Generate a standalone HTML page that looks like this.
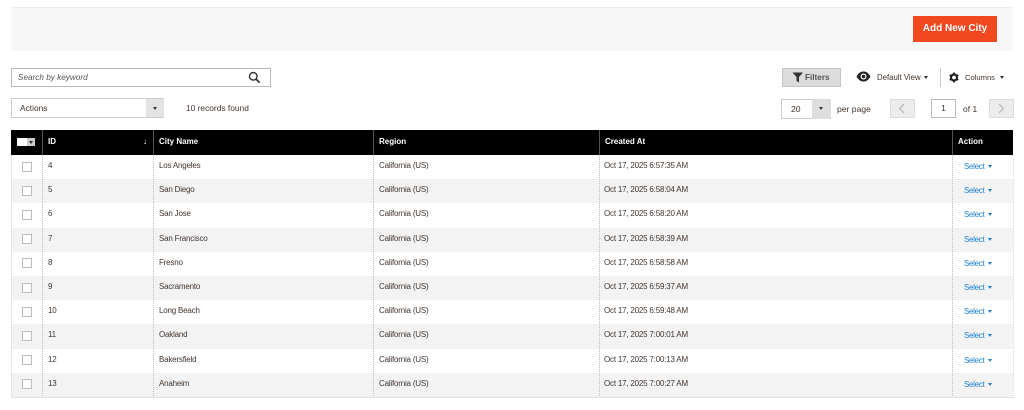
<!DOCTYPE html>
<html>
<head>
<meta charset="utf-8">
<style>
html,body{margin:0;padding:0;background:#fff}
body{width:1024px;height:410px;position:relative;overflow:hidden;font-family:"Liberation Sans",sans-serif;color:#41362f;font-size:8px;filter:blur(.3px)}
.a{position:absolute;white-space:nowrap}
.bar{left:11px;top:7px;width:1002px;height:44px;background:#f7f7f7;border-top:1px solid #eee;box-sizing:border-box}
.add{left:913px;top:16px;width:84px;height:26px;background:#f2481f;color:#fff;font-weight:bold;font-size:10px;line-height:26px;text-align:center}
.box{box-sizing:border-box;border:1px solid #b8b8b8;background:#fff}
.head{left:11px;top:130px;width:1002px;height:25px;background:#000;color:#fff;font-weight:bold;font-size:8px}
.head span{position:absolute;top:0;line-height:23px}
.head i{position:absolute;top:0;width:1px;height:25px;background:#555}
.row{position:absolute;left:11px;width:1002px;height:24.2px;line-height:21px;letter-spacing:-.2px}
.row.o{background:#f3f3f3}
.row span{position:absolute;top:0}
.row b{position:absolute;left:11px;top:6.5px;width:10px;height:10px;box-sizing:border-box;border:1px solid #bbb;background:#fff;font-weight:normal}
.row .s{left:953px;color:#1a7fd0;top:1px;font-size:8px;letter-spacing:-.3px}
.row .t{position:absolute;left:977px;top:10px;width:0;height:0;border:2.5px solid transparent;border-top:3.5px solid #1a7fd0;border-bottom:0}
.v{position:absolute;top:155px;width:0;height:243px;border-left:1px dotted #bcbcbc}
.tri{position:absolute;width:0;height:0;border:2.5px solid transparent;border-top:3.5px solid #333;border-bottom:0}
.gray{background:#ececec;border:1px solid #ddd;box-sizing:border-box}
</style>
</head>
<body>
<div class="a bar"></div>
<div class="a add">Add New City</div>

<div class="a box" style="left:11px;top:68px;width:260px;height:19px;"></div>
<div class="a" style="left:18px;top:73px;font-style:italic;color:#555;font-size:8.2px">Search by keyword</div>
<svg class="a" style="left:248px;top:71px" width="13" height="13" viewBox="0 0 13 13"><circle cx="5.3" cy="5.3" r="3.8" fill="none" stroke="#333" stroke-width="1.4"/><path d="M8 8l3.6 3.6" stroke="#333" stroke-width="1.7"/></svg>

<div class="a box" style="left:11px;top:98px;width:153px;height:20px;border-color:#ccc"></div>
<div class="a" style="left:146px;top:99px;width:18px;height:18px;background:#e3e3e3"></div>
<div class="tri" style="left:152.5px;top:106.5px"></div>
<div class="a" style="left:20px;top:103px;font-size:8.4px">Actions</div>
<div class="a" style="left:186px;top:103px;font-size:8.4px">10 records found</div>

<div class="a" style="left:782px;top:68px;width:59px;height:19px;background:#dcdcdc;border:1px solid #c4c4c4;box-sizing:border-box"></div>
<svg class="a" style="left:792px;top:72px" width="12" height="11" viewBox="0 0 12 11"><path d="M0.5 0.5h10.5L7 5v5.500L4.500 9V5z" fill="#333"/></svg>
<div class="a" style="left:805px;top:73px;font-weight:bold;color:#555;font-size:8.2px">Filters</div>
<svg class="a" style="left:856px;top:71px" width="15" height="11" viewBox="0 0 15 11"><path d="M0.500 5.500C3 1.500 5 0.500 7.500 0.500S12 1.500 14.500 5.500C12 9.500 10 10.500 7.500 10.500S3 9.500 0.500 5.500z" fill="#222"/><circle cx="7.500" cy="5.500" r="3" fill="#fff"/><circle cx="7.500" cy="5.500" r="1.800" fill="#222"/></svg>
<div class="a" style="left:877px;top:73px;font-size:7.8px">Default View</div>
<div class="tri" style="left:924px;top:76px"></div>
<div class="a" style="left:940px;top:68px;width:1px;height:19px;background:#ccc"></div>
<svg class="a" style="left:949px;top:72px" width="10" height="11" viewBox="0 0 10 11"><circle cx="5" cy="5.500" r="3" fill="none" stroke="#222" stroke-width="2.200"/><path d="M5 0.500v2M5 8.500v2M.7 3l1.700 1M7.600 7l1.700 1M.7 8l1.700-1M7.600 4l1.700-1" stroke="#222" stroke-width="1.800"/></svg>
<div class="a" style="left:965px;top:73px;font-size:7.6px">Columns</div>
<div class="tri" style="left:1000px;top:76px"></div>

<div class="a box" style="left:781px;top:99px;width:50px;height:20px;border-color:#ccc"></div>
<div class="a" style="left:812px;top:99px;width:19px;height:20px;background:#dedede"></div>
<div class="tri" style="left:819px;top:106.500px"></div>
<div class="a" style="left:791px;top:104px;font-size:8.6px">20</div>
<div class="a" style="left:837px;top:104px;font-size:8.6px">per page</div>
<div class="a gray" style="left:890px;top:99px;width:25px;height:19px"></div>
<svg class="a" style="left:898px;top:103px" width="7" height="11" viewBox="0 0 7 11"><path d="M6 1L1.500 5.500L6 10" fill="none" stroke="#bbb" stroke-width="1.300"/></svg>
<div class="a box" style="left:931px;top:99px;width:25px;height:19px;border-color:#bbb;text-align:center;line-height:17px;font-size:8.6px">1</div>
<div class="a" style="left:963px;top:104px;font-size:8.5px">of 1</div>
<div class="a gray" style="left:989px;top:99px;width:25px;height:19px"></div>
<svg class="a" style="left:998px;top:103px" width="7" height="11" viewBox="0 0 7 11"><path d="M1 1L5.500 5.500L1 10" fill="none" stroke="#bbb" stroke-width="1.300"/></svg>

<div class="a head">
<div class="a" style="left:6px;top:8px;width:18px;height:8px;background:#fff"></div>
<div class="a" style="left:16px;top:8px;width:8px;height:8px;background:#ccc"></div>
<div class="tri" style="left:18px;top:11px;border-width:2px;border-top-width:3px"></div>
<i style="left:31px"></i><i style="left:142px"></i><i style="left:362px"></i><i style="left:588px"></i><i style="left:941px"></i>
<span style="left:37px">ID</span>
<span style="left:132px;font-weight:normal">↓</span>
<span style="left:148px">City Name</span>
<span style="left:368px">Region</span>
<span style="left:594px">Created At</span>
<span style="left:947px">Action</span>
</div>

<div class="row" style="top:155px"><b></b><span style="left:37px">4</span><span style="left:148px">Los Angeles</span><span style="left:368px">California (US)</span><span style="left:593px">Oct 17, 2025 6:57:35 AM</span><span class="s">Select</span><i class="t"></i></div>
<div class="row o" style="top:179.200px"><b></b><span style="left:37px">5</span><span style="left:148px">San Diego</span><span style="left:368px">California (US)</span><span style="left:593px">Oct 17, 2025 6:58:04 AM</span><span class="s">Select</span><i class="t"></i></div>
<div class="row" style="top:203.400px"><b></b><span style="left:37px">6</span><span style="left:148px">San Jose</span><span style="left:368px">California (US)</span><span style="left:593px">Oct 17, 2025 6:58:20 AM</span><span class="s">Select</span><i class="t"></i></div>
<div class="row o" style="top:227.600px"><b></b><span style="left:37px">7</span><span style="left:148px">San Francisco</span><span style="left:368px">California (US)</span><span style="left:593px">Oct 17, 2025 6:58:39 AM</span><span class="s">Select</span><i class="t"></i></div>
<div class="row" style="top:251.800px"><b></b><span style="left:37px">8</span><span style="left:148px">Fresno</span><span style="left:368px">California (US)</span><span style="left:593px">Oct 17, 2025 6:58:58 AM</span><span class="s">Select</span><i class="t"></i></div>
<div class="row o" style="top:276px"><b></b><span style="left:37px">9</span><span style="left:148px">Sacramento</span><span style="left:368px">California (US)</span><span style="left:593px">Oct 17, 2025 6:59:37 AM</span><span class="s">Select</span><i class="t"></i></div>
<div class="row" style="top:300.200px"><b></b><span style="left:37px">10</span><span style="left:148px">Long Beach</span><span style="left:368px">California (US)</span><span style="left:593px">Oct 17, 2025 6:59:48 AM</span><span class="s">Select</span><i class="t"></i></div>
<div class="row o" style="top:324.400px"><b></b><span style="left:37px">11</span><span style="left:148px">Oakland</span><span style="left:368px">California (US)</span><span style="left:593px">Oct 17, 2025 7:00:01 AM</span><span class="s">Select</span><i class="t"></i></div>
<div class="row" style="top:348.600px"><b></b><span style="left:37px">12</span><span style="left:148px">Bakersfield</span><span style="left:368px">California (US)</span><span style="left:593px">Oct 17, 2025 7:00:13 AM</span><span class="s">Select</span><i class="t"></i></div>
<div class="row o" style="top:372.800px"><b></b><span style="left:37px">13</span><span style="left:148px">Anaheim</span><span style="left:368px">California (US)</span><span style="left:593px">Oct 17, 2025 7:00:27 AM</span><span class="s">Select</span><i class="t"></i></div>

<div class="v" style="left:11px;border-color:#d8d8d8"></div>
<div class="v" style="left:42px"></div>
<div class="v" style="left:153px"></div>
<div class="v" style="left:373px"></div>
<div class="v" style="left:599px"></div>
<div class="v" style="left:952px"></div>
<div class="v" style="left:1013px;border-color:#d8d8d8"></div>
<div class="a" style="left:11px;top:397px;width:1002px;height:1px;background:#e3e3e3"></div>
</body>
</html>
